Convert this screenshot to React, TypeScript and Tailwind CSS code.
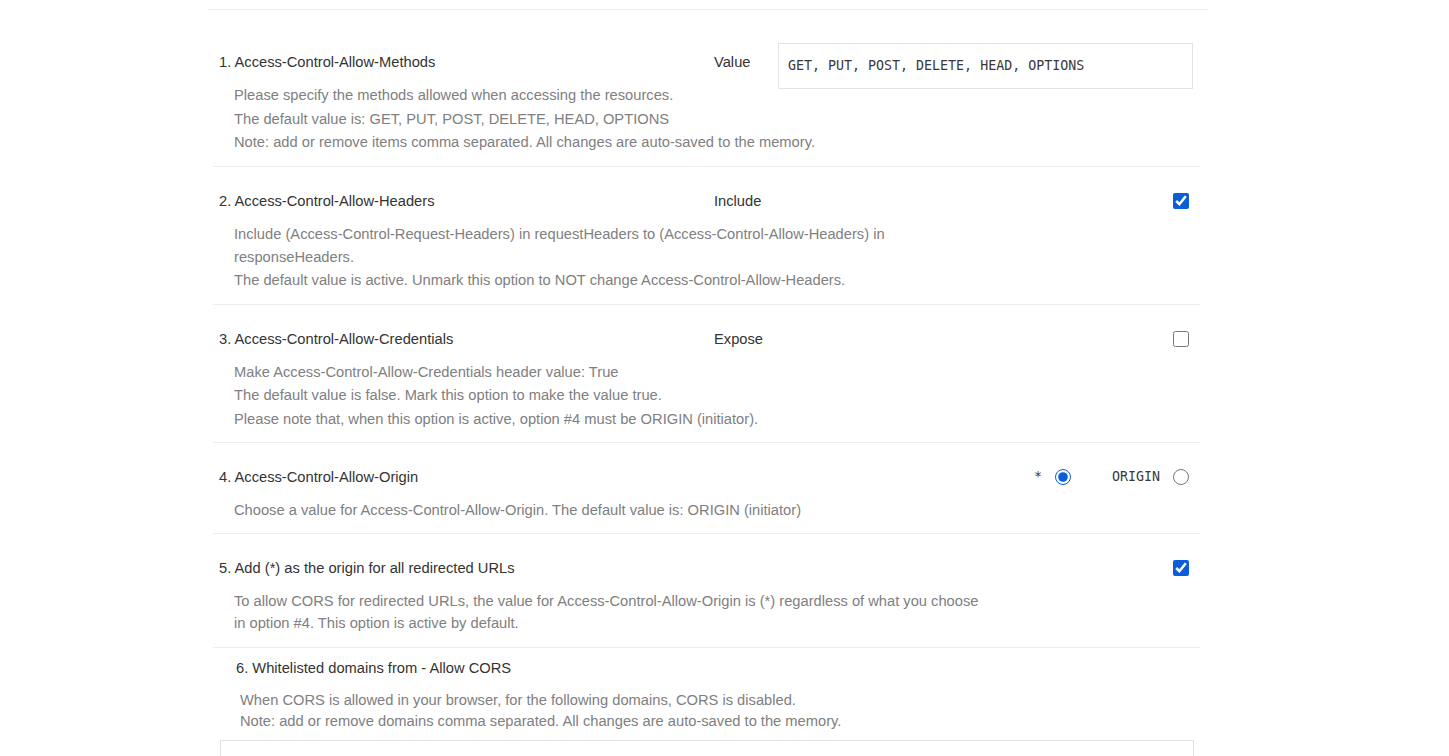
import React from 'react';

type RowProps = {
  num: number;
  title: string;
  label?: string;
  control?: React.ReactNode;
  desc: React.ReactNode[];
  lineClass?: string;
  padClass?: string;
};

const mono = { fontFamily: '"DejaVu Sans Mono", "Liberation Mono", monospace' };

function Check({ checked }: { checked: boolean }) {
  return (
    <input
      type="checkbox"
      defaultChecked={checked}
      className="w-4 h-4 m-0 accent-[#0b5ed7]"
    />
  );
}

function Radio({ checked }: { checked: boolean }) {
  return (
    <input
      type="radio"
      name="origin"
      defaultChecked={checked}
      className="w-4 h-4 m-0 accent-[#0b5ed7]"
    />
  );
}

function Row({ num, title, label, control, desc, lineClass = 'leading-[23px]', padClass = 'pb-3' }: RowProps) {
  return (
    <div className={`border-b border-[#eeeeee] pt-6 pl-[6px] pr-[7px] ${padClass}`}>
      {/* Başlık satırı */}
      <div className="flex items-center h-5">
        <div className="w-[495px] text-[14.7px] leading-5 text-[#333]">
          {num}. {title}
        </div>
        {label && <div className="w-16 text-[14.7px] leading-5 text-[#333]">{label}</div>}
        <div className="flex-1 flex justify-end items-center">{control}</div>
      </div>
      {/* Açıklama */}
      <div className={`mt-3 pl-[15px] max-w-[768px] text-[14.7px] text-[#808080] ${lineClass}`}>
        {desc.map((d, i) => (
          <div key={i}>{d}</div>
        ))}
      </div>
    </div>
  );
}

export default function App() {
  return (
    <div className="min-h-screen bg-white" style={{ fontFamily: '"Liberation Sans", Arial, sans-serif' }}>
      <div className="ml-[208px] w-[1000px] pt-[9px]">
        <div className="border-t border-[#efefef]" />
        <div className="mt-[18px] ml-[5px] w-[987px]">
          <Row
            num={1}
            title="Access-Control-Allow-Methods"
            label="Value"
            lineClass="leading-[23.5px]"
            padClass="pb-[11px]"
            control={
              <div className="h-5 flex items-start">
                <div
                  className="-mt-[9px] w-[415px] h-[46px] border border-[#e3e3e3] pl-[9px] flex items-center text-[13.3px] text-[#3a3a3a]"
                  style={mono}
                >
                  GET, PUT, POST, DELETE, HEAD, OPTIONS
                </div>
              </div>
            }
            desc={[
              'Please specify the methods allowed when accessing the resources.',
              'The default value is: GET, PUT, POST, DELETE, HEAD, OPTIONS',
              'Note: add or remove items comma separated. All changes are auto-saved to the memory.',
            ]}
          />
          <Row
            num={2}
            title="Access-Control-Allow-Headers"
            label="Include"
            control={<div className="flex mr-[4px]"><Check checked /></div>}
            desc={[
              'Include (Access-Control-Request-Headers) in requestHeaders to (Access-Control-Allow-Headers) in responseHeaders.',
              'The default value is active. Unmark this option to NOT change Access-Control-Allow-Headers.',
            ]}
          />
          <Row
            num={3}
            title="Access-Control-Allow-Credentials"
            label="Expose"
            lineClass="leading-[23.5px]"
            padClass="pb-[11px]"
            control={<div className="flex mr-[4px]"><Check checked={false} /></div>}
            desc={[
              'Make Access-Control-Allow-Credentials header value: True',
              'The default value is false. Mark this option to make the value true.',
              'Please note that, when this option is active, option #4 must be ORIGIN (initiator).',
            ]}
          />
          <Row
            num={4}
            title="Access-Control-Allow-Origin"
            padClass="pb-[11px]"
            control={
              <div className="flex items-center h-5 mr-[4px] text-[13.3px] leading-5 text-[#3a3a3a]" style={mono}>
                <span>*</span>
                <span className="ml-[13px] flex"><Radio checked /></span>
                <span className="ml-[41px]">ORIGIN</span>
                <span className="ml-[13px] flex"><Radio checked={false} /></span>
              </div>
            }
            desc={['Choose a value for Access-Control-Allow-Origin. The default value is: ORIGIN (initiator)']}
          />
          <Row
            num={5}
            title="Add (*) as the origin for all redirected URLs"
            lineClass="leading-[22px]"
            padClass="pb-[13px]"
            control={<div className="flex mr-[4px]"><Check checked /></div>}
            desc={[
              'To allow CORS for redirected URLs, the value for Access-Control-Allow-Origin is (*) regardless of what you choose in option #4. This option is active by default.',
            ]}
          />
          {/* Beyaz liste */}
          <div className="pt-[10px]">
            <div className="pl-[23px] text-[14.7px] leading-5 text-[#333]">
              6. Whitelisted domains from - Allow CORS
            </div>
            <div className="mt-3 pl-[27px] text-[14.7px] leading-[21px] text-[#808080]">
              <div>When CORS is allowed in your browser, for the following domains, CORS is disabled.</div>
              <div>Note: add or remove domains comma separated. All changes are auto-saved to the memory.</div>
            </div>
            <div className="mt-[8px] ml-[7px] w-[974px] h-[80px] border border-[#e3e3e3]" />
          </div>
        </div>
      </div>
    </div>
  );
}
